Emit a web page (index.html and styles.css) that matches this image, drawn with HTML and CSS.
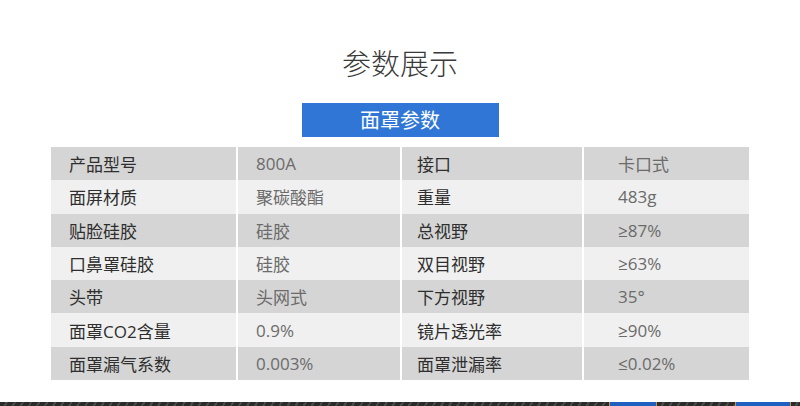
FILE: index.html
```html
<!DOCTYPE html>
<html lang="zh-CN">
<head>
<meta charset="utf-8">
<title>参数展示</title>
<link rel="stylesheet" href="styles.css">
</head>
<body>
<div class="page">
  <h1 class="title">参数展示</h1>
  <div class="tab">面罩参数</div>
  <div class="table">
    <div class="row"><div class="k">产品型号</div><div class="v">800A</div><div class="k k2">接口</div><div class="v v2">卡口式</div></div>
    <div class="row"><div class="k">面屏材质</div><div class="v">聚碳酸酯</div><div class="k k2">重量</div><div class="v v2">483g</div></div>
    <div class="row"><div class="k">贴脸硅胶</div><div class="v">硅胶</div><div class="k k2">总视野</div><div class="v v2">≥87%</div></div>
    <div class="row"><div class="k">口鼻罩硅胶</div><div class="v">硅胶</div><div class="k k2">双目视野</div><div class="v v2">≥63%</div></div>
    <div class="row"><div class="k">头带</div><div class="v">头网式</div><div class="k k2">下方视野</div><div class="v v2">35°</div></div>
    <div class="row"><div class="k">面罩CO2含量</div><div class="v">0.9%</div><div class="k k2">镜片透光率</div><div class="v v2">≥90%</div></div>
    <div class="row"><div class="k">面罩漏气系数</div><div class="v">0.003%</div><div class="k k2">面罩泄漏率</div><div class="v v2">≤0.02%</div></div>
  </div>
  <div class="strip">
    <div class="seg dark w1"></div>
    <div class="seg blue w2"></div>
    <div class="seg dark w3"></div>
    <div class="seg blue w4"></div>
    <div class="seg dark w5"></div>
  </div>
</div>
</body>
</html>
```

FILE: styles.css
```css
html, body {
  margin: 0;
  padding: 0;
  background: #ffffff;
}
body {
  font-family: "Open Sans", "Noto Sans CJK SC", sans-serif;
}
.page {
  width: 800px;
  height: 406px;
  display: flex;
  flex-direction: column;
  align-items: center;
  overflow: hidden;
}
.title {
  margin: 44px 0 0;
  height: 36px;
  line-height: 36px;
  font-size: 29px;
  font-weight: 300;
  color: #3a3a3a;
  letter-spacing: 0;
  font-family: "Noto Sans CJK SC", sans-serif;
}
.tab {
  margin-top: 23px;
  width: 197px;
  height: 34px;
  line-height: 34px;
  background: #2f76d6;
  color: #ffffff;
  font-size: 20px;
  text-align: center;
  font-family: "Noto Sans CJK SC", sans-serif;
}
.table {
  margin-top: 10px;
  width: 698px;
  height: 233px;
  display: flex;
  flex-direction: column;
}
.row {
  flex: 1;
  display: grid;
  grid-template-columns: 185px 162px 180px 165px;
  column-gap: 2px;
  font-size: 17px;
}
.row > div {
  display: flex;
  align-items: center;
  background: #d5d5d5;
}
.row:nth-child(even) > div {
  background: #f0f0f0;
}
.k {
  padding-left: 18px;
  color: #2e2e2e;
}
.k2 {
  padding-left: 15px;
}
.v {
  padding-left: 18px;
  color: #6b6b6b;
}
.v2 {
  padding-left: 34px;
}
.strip {
  margin-top: auto;
  width: 800px;
  height: 4px;
  display: flex;
}
.seg {
  height: 100%;
}
.dark {
  background: repeating-linear-gradient(120deg, #2b2b2b 0 5px, #4a4a4a 5px 7px);
}
.blue {
  background: #1e5fc0;
  border-left: 1px solid #c8913a;
  border-right: 1px solid #c8913a;
}
.w1 { width: 609px; }
.w2 { width: 46px; }
.w3 { width: 78px; }
.w4 { width: 54px; }
.w5 { flex: 1; }
```
